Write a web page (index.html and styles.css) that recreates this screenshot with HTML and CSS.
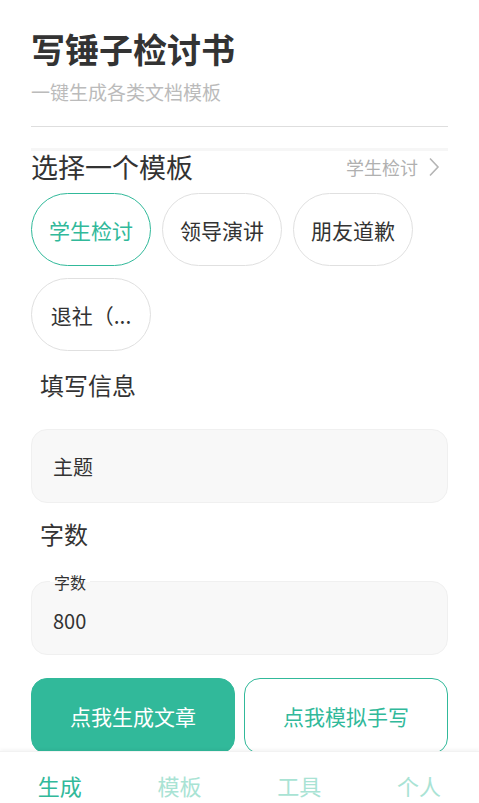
FILE: index.html
```html
<!DOCTYPE html>
<html lang="zh-CN">
<head>
    <meta charset="UTF-8">
    <meta name="viewport" content="width=device-width, initial-scale=1.0">
    <title>写锤子检讨书</title>
    <link rel="stylesheet" href="styles.css">
</head>
<body>
    <div id="app">
        <div class="content">
            <div class="header">
                <h1 class="title">写锤子检讨书</h1>
                <div class="subtitle">一键生成各类文档模板</div>
            </div>
            <div class="divider"></div>
            <div class="shade"></div>

            <div class="section-head">
                <div class="section-title">选择一个模板</div>
                <div class="section-more">
                    学生检讨
                    <svg width="12" height="20" viewBox="0 0 12 20"><path d="M2 1.5 L10 10 L2 18.5" fill="none" stroke="#b5b5b5" stroke-width="1.6"/></svg>
                </div>
            </div>

            <div class="chips">
                <div class="chip active">学生检讨</div>
                <div class="chip">领导演讲</div>
                <div class="chip">朋友道歉</div>
                <div class="chip">退社（...</div>
            </div>

            <div class="label">填写信息</div>
            <div class="field">
                <span class="field-text">主题</span>
            </div>

            <div class="label label-count">字数</div>
            <div class="field field-float">
                <span class="float-label">字数</span>
                <span class="field-text">800</span>
            </div>

            <div class="actions">
                <button class="btn btn-primary">点我生成文章</button>
                <button class="btn btn-outline">点我模拟手写</button>
            </div>
        </div>

        <div class="tabbar">
            <div class="tab active">生成</div>
            <div class="tab">模板</div>
            <div class="tab">工具</div>
            <div class="tab">个人</div>
        </div>
    </div>
</body>
</html>
```

FILE: styles.css
```css
body {
    margin: 0;
    font-family: "Noto Sans CJK SC", "Noto Sans", sans-serif;
    background-color: #ffffff;
    color: #333333;
}
#app {
    height: 803px;
    display: flex;
    flex-direction: column;
}
.content {
    flex: 1;
    overflow: hidden;
    padding: 0 31px;
}
.header {
    padding-top: 26px;
}
.title {
    margin: 0;
    font-size: 34px;
    line-height: 46px;
    font-weight: bold;
    color: #333333;
}
.subtitle {
    margin-top: 7px;
    font-size: 19px;
    line-height: 26px;
    color: #bbbbbb;
}
.divider {
    margin-top: 21px;
    height: 1px;
    background-color: #dedede;
}
.shade {
    margin-top: 21px;
    height: 3px;
    background-color: #f6f6f6;
}
.section-head {
    display: flex;
    justify-content: space-between;
    align-items: center;
    height: 32px;
}
.section-title {
    font-size: 27px;
    line-height: 32px;
    color: #333333;
}
.section-more {
    display: flex;
    align-items: center;
    gap: 10px;
    font-size: 18px;
    color: #b0b0b0;
    padding-right: 8px;
}
.chips {
    display: flex;
    flex-wrap: wrap;
    gap: 12px 11px;
    margin-top: 10px;
}
.chip {
    width: 120px;
    height: 73px;
    box-sizing: border-box;
    border: 1.5px solid #e0e0e0;
    border-radius: 37px;
    display: flex;
    align-items: center;
    justify-content: center;
    font-size: 21px;
    color: #333333;
}
.chip.active {
    border-color: #31b99a;
    color: #31b99a;
}
.label {
    font-size: 24px;
    line-height: 34px;
    margin: 17px 0 0 9px;
    color: #333333;
}
.field {
    margin-top: 27px;
    height: 74px;
    box-sizing: border-box;
    background-color: #f8f8f8;
    border: 1px solid #f0f0f0;
    border-radius: 16px;
    display: flex;
    align-items: center;
    padding-left: 21px;
    position: relative;
}
.field-text {
    font-size: 20px;
    color: #333333;
}
.label-count {
    margin-top: 14px;
}
.field-float {
    margin-top: 30px;
    padding-top: 4px;
}
.float-label {
    position: absolute;
    left: 18px;
    top: -10px;
    padding: 0 4px;
    font-size: 16px;
    line-height: 20px;
    color: #333333;
    background: linear-gradient(#ffffff 50%, #f8f8f8 50%);
}
.actions {
    display: flex;
    gap: 9px;
    margin-top: 23px;
}
.btn {
    flex: 1;
    height: 76px;
    border-radius: 16px;
    font-family: inherit;
    font-size: 21px;
    cursor: pointer;
}
.btn-primary {
    background-color: #31b99a;
    border: 1.5px solid #31b99a;
    color: #ffffff;
}
.btn-outline {
    background-color: #ffffff;
    border: 1.5px solid #31b99a;
    color: #31b99a;
}
.tabbar {
    height: 51px;
    display: flex;
    align-items: center;
    box-shadow: 0 -2px 3px rgba(0, 0, 0, 0.04);
    border-top: 1px solid #f2f2f2;
    position: relative;
}
.tab {
    flex: 1;
    text-align: center;
    font-size: 22px;
    padding-top: 14px;
    color: #a9e3d4;
}
.tab.active {
    color: #31b99a;
}
```
